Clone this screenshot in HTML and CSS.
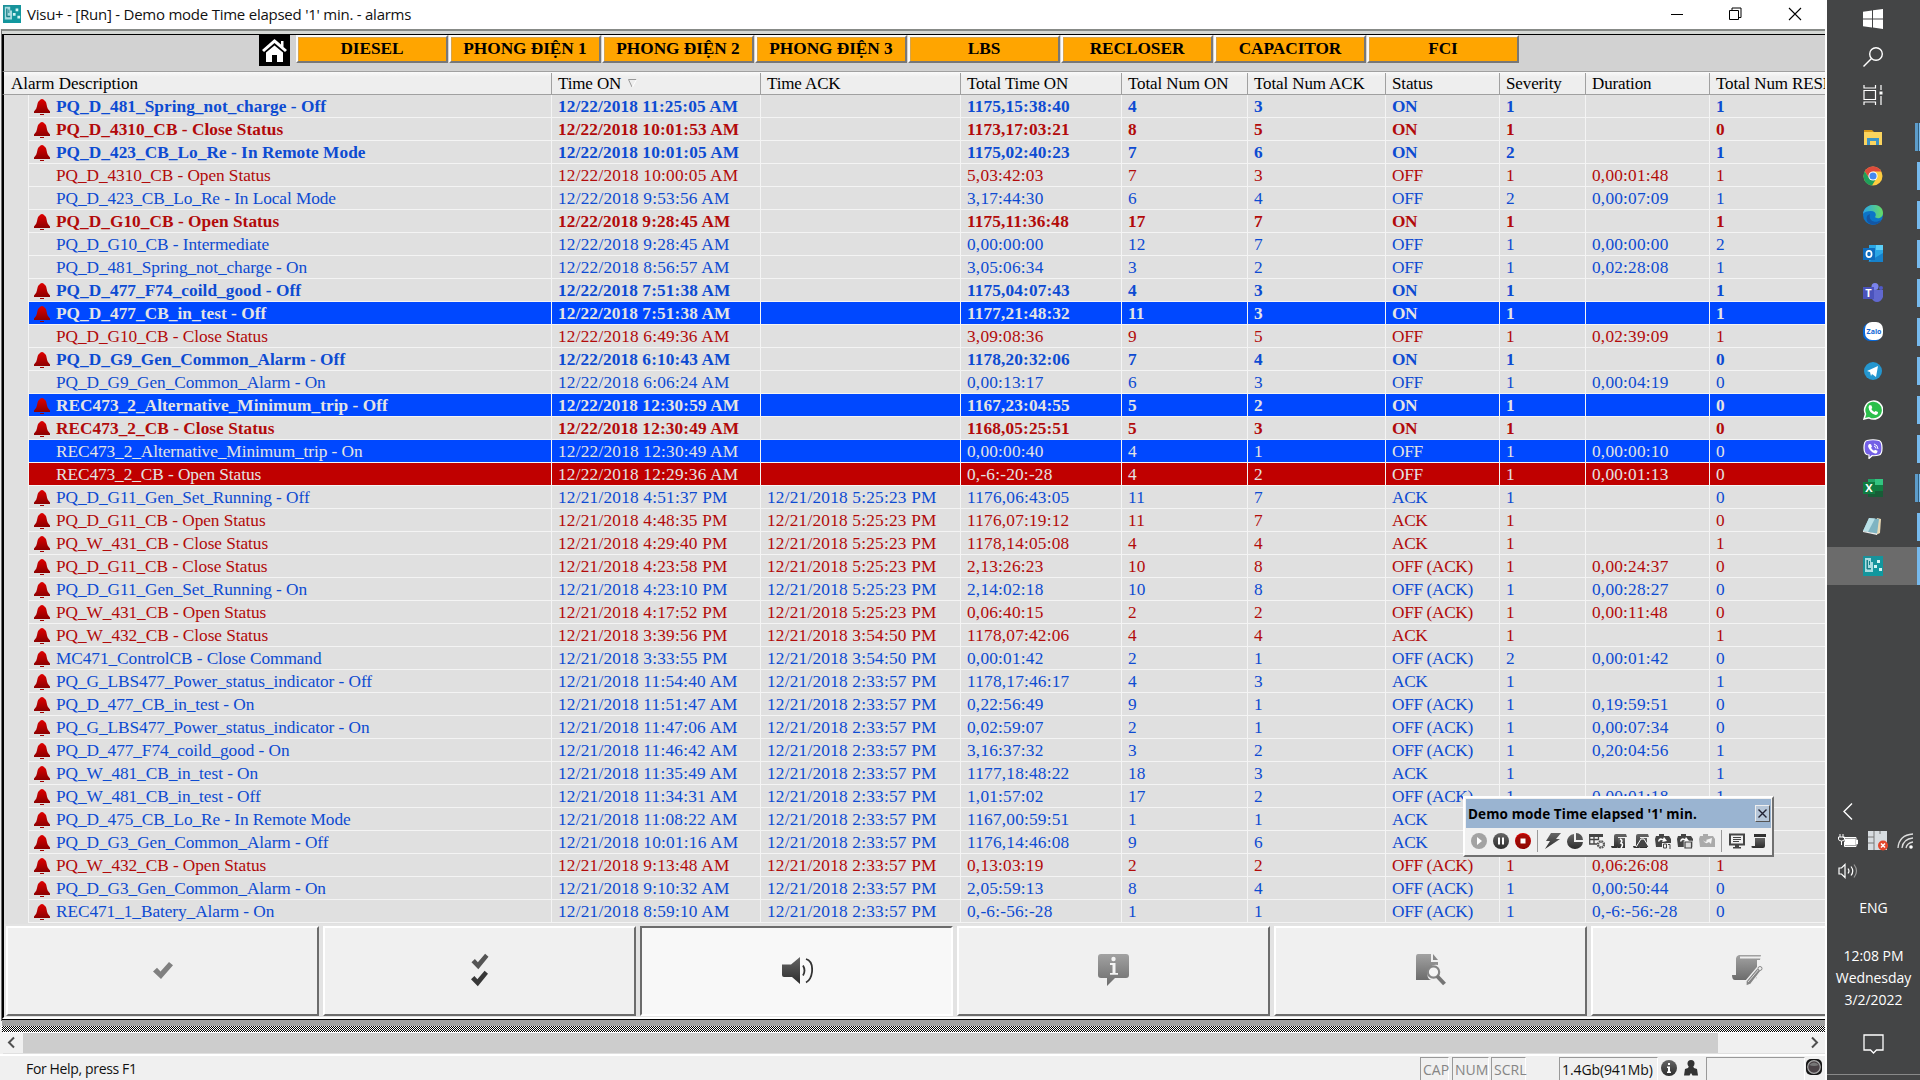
FILE: index.html
```html
<!DOCTYPE html>
<html lang="en">
<head>
<meta charset="utf-8">
<title>Visu+ - alarms</title>
<link rel="stylesheet" href="styles.css">
</head>
<body>
<svg class="defs" width="0" height="0">
  <defs>
    <linearGradient id="gRed" x1="0" y1="0" x2="0" y2="1"><stop offset="0" stop-color="#e00000"/><stop offset="1" stop-color="#8c0000"/></linearGradient>
    <linearGradient id="gDark" x1="0" y1="0" x2="0" y2="1"><stop offset="0" stop-color="#666"/><stop offset="1" stop-color="#2c2c2c"/></linearGradient>
    <linearGradient id="gGrey" x1="0" y1="0" x2="0" y2="1"><stop offset="0" stop-color="#a2a2a2"/><stop offset="1" stop-color="#6c6c6c"/></linearGradient>
    <linearGradient id="gTeal" x1="0" y1="0" x2="1" y2="1"><stop offset="0" stop-color="#1d8f98"/><stop offset="1" stop-color="#0d9aa0"/></linearGradient>
    <linearGradient id="gEdge" x1="0" y1="0" x2="1" y2="0"><stop offset="0" stop-color="#2aa5ea"/><stop offset="1" stop-color="#67dc63"/></linearGradient>
    <symbol id="bell" viewBox="0 0 16 16"><path d="M8 0C6.500 0 6.400 1 5.500 1.600 3 3.300 3.600 7 2.200 9.800L0 12.600V14h16v-1.400l-2.200-2.800C12.400 7 13 3.300 10.500 1.600 9.600 1 9.500 0 8 0z" fill="url(#gRed)"/><path d="M6 15h4v1H6z" fill="#a00000"/></symbol>
    <symbol id="visu" viewBox="0 0 20 20"><path d="M0 0h20v20H0z" fill="url(#gTeal)"/><path d="M2 2h6v4h2v10H2z" fill="#a9dce0"/><path d="M3.500 4H5v9H3.500zM6 5h1v4H6zM4 12h4v1.500H4z" fill="#1a7f88"/><path d="M14 4h3v3h-3zM11 9h3v3h-3zM16 12h3v3h-3z" fill="#d4f5f4"/></symbol>
    <symbol id="check" viewBox="0 0 20 20"><path d="M0 11l4-4 3.500 4L16 1l4 3.500L8 19z"/></symbol>
    <symbol id="scroll" viewBox="0 0 16 16"><path d="M5 1h10l1 3H7v9.500Q7 15 5.500 15H1.500Q0 15 0 13h3V3Q3 1 5 1z"/><path d="M7 5h7v10H6.500L7 13z"/></symbol>
  </defs>
</svg>
<div class="desktop">
  <main class="window">
    <header class="titlebar">
      <svg class="app-icon" width="18" height="18"><use href="#visu"/></svg>
      <span class="title">Visu+ - [Run] - Demo mode Time elapsed '1' min. - alarms</span>
      <div class="controls">
        <svg width="12" height="14"><path d="M0 7.500h12" stroke="#000"/></svg>
        <svg width="13" height="14" fill="none" stroke="#000"><path d="M.5 3.500h9v9h-9zM3 3.500V1h9v9.500H9.500"/></svg>
        <svg width="14" height="14"><path d="M1 1l12 12M13 1L1 13" stroke="#000" stroke-width="1.100"/></svg>
      </div>
    </header>
    <section class="client">
      <nav class="nav">
        <div class="home"><svg width="25" height="24" viewBox="0 0 25 24"><path d="M12.500 0L0 11l2 2L12.500 4 23 13l2-2-3.500-3V2h-2.500v3.500z" fill="#fff"/><path d="M4 13.500L12.500 6.500 21 13.500V23h-6v-7h-5v7H4z" fill="#fff"/></svg></div>
        <div class="tab">DIESEL</div><div class="tab">PHONG ĐIỆN 1</div><div class="tab">PHONG ĐIỆN 2</div><div class="tab">PHONG ĐIỆN 3</div><div class="tab">LBS</div><div class="tab">RECLOSER</div><div class="tab">CAPACITOR</div><div class="tab">FCI</div>
      </nav>
      <div class="cols head">
        <div class="name">Alarm Description</div><div>Time ON <svg width="9" height="9" viewBox="0 0 9 9" fill="none"><path d="M8.500.5h-8L4 8" stroke="#999"/><path d="M8.500.5L4.500 8" stroke="#fff"/></svg></div><div>Time ACK</div><div>Total Time ON</div><div>Total Num ON</div><div>Total Num ACK</div><div>Status</div><div>Severity</div><div>Duration</div><div>Total Num RESET</div>
      </div>
      <div class="rows" id="rows"></div>
      <div class="actions">
        <button><svg width="20" height="19" viewBox="0 0 20 20" preserveAspectRatio="none" fill="#808080"><use href="#check"/></svg></button>
        <button class="double"><svg width="20" height="17" fill="#555"><use href="#check"/></svg><svg width="21" height="17" fill="#383838"><use href="#check"/></svg></button>
        <button class="pressed"><svg width="32" height="27" viewBox="0 0 32 27"><path d="M1 7.500h9L19 0v27l-8-7H3q-2 0-2-2z" fill="url(#gDark)"/><path d="M22 8.500q3 5 0 10M25 2q7 2 6 13-1 8-6 10.500" fill="none" stroke="#333" stroke-width="1.800"/></svg></button>
        <button><svg width="33" height="34" viewBox="0 0 33 34"><path d="M4 1h25q3 0 3 3v18q0 3-3 3H18l-8 8v-8H4q-3 0-3-3V4q0-3 3-3z" fill="url(#gGrey)"/><circle cx="16.500" cy="6" r="2.200" fill="#f4f4f4"/><path d="M13 10h5.500v10H21v1.800h-8V20h2.500v-8H13z" fill="#f4f4f4"/></svg></button>
        <button><svg width="31" height="32" viewBox="0 0 31 32"><path d="M3 0h13v8h7v3a9 9 0 0 0-9 14l2 1H1V3q0-3 2-3z" fill="url(#gGrey)"/><path d="M18 0v6h5z" fill="#888"/><circle cx="18.500" cy="18" r="5.700" fill="#f4f4f4" stroke="#858585" stroke-width="2.200"/><path d="M22 22l7.500 8" stroke="#757575" stroke-width="4"/></svg></button>
        <button><svg width="31" height="32" viewBox="0 0 31 32"><path d="M7 1h22l-1 5H25v18l-8 2H3q-3 0-3-5h4V5q0-3 3-4z" fill="url(#gGrey)"/><path d="M8 2.500h21v2H8z" fill="#efefef"/><path d="M14 27L25 14l4 3-10 13-5 2z" fill="#858585" stroke="#efefef" stroke-width="1.300"/><path d="M16 28l11-13" stroke="#efefef" stroke-width=".8"/><circle cx="28" cy="14.500" r="2" fill="#efefef" stroke="#888"/></svg></button>
      </div>
      <div class="rule"></div>
    </section>
    <div class="hatch"></div>
    <div class="scrollbar">
      <svg width="20" height="20" fill="none" stroke="#505050" stroke-width="2"><path d="M11 4.500l-5 5 5 5"/></svg>
      <div class="thumb"></div>
      <svg width="20" height="20" fill="none" stroke="#505050" stroke-width="2"><path d="M7 4.500l5 5-5 5"/></svg>
    </div>
    <footer class="status">
      <span class="help">For Help, press F1</span>
      <span class="key cap">CAP</span><span class="key num">NUM</span><span class="key scrl">SCRL</span>
      <span class="mem">1.4Gb(941Mb)</span>
      <svg class="info" width="16" height="16" viewBox="0 0 16 16"><circle cx="8" cy="8" r="8" fill="url(#gDark)"/><path d="M6 6.500h3v5h1V13H6v-1.500h1V8H6zM7 3h2v2H7z" fill="#fff"/></svg>
      <svg class="user" width="14" height="16" viewBox="0 0 14 16"><circle cx="7" cy="3.500" r="3.500" fill="#333"/><path d="M5 6h4l1 2 3 1 1 6.500H8.500L7 13l-1.500 2.500H0L1 9l3-1z" fill="#333"/></svg>
      <span class="slot"></span>
      <svg class="led" width="16" height="16" viewBox="0 0 16 16"><rect width="16" height="16" rx="5" fill="#151515"/><circle cx="8" cy="8" r="6.300" fill="#4a4246" stroke="#aaa" stroke-width="1.200"/><path d="M3 6q5-5 10 0-5 2-10 0z" fill="#777"/></svg>
    </footer>

    <aside class="floating">
      <div class="float-title"><b>Demo mode Time elapsed '1' min.</b><span class="close"><svg width="9" height="9"><path d="M.5.5l8 8M8.500.5l-8 8" stroke="#223" stroke-width="1.400"/></svg></span></div>
      <div class="tools">
        <svg viewBox="0 0 16 16"><circle cx="8" cy="8" r="8" fill="#a3a3a3"/><path d="M6 4l5 4-5 4z" fill="#fff"/></svg>
        <svg viewBox="0 0 16 16"><circle cx="8" cy="8" r="8" fill="url(#gDark)"/><path d="M5 4.500h2v7H5zM9 4.500h2v7H9z" fill="#fff"/></svg>
        <svg viewBox="0 0 16 16"><circle cx="8" cy="8" r="8" fill="url(#gRed)"/><circle cx="8" cy="8" r="7" fill="#8f1007" opacity=".65"/><path d="M5.500 5.500h5v5h-5z" fill="#fff"/></svg>
        <i></i>
        <svg viewBox="0 0 16 16"><path d="M6 0h10l-5 6h4L0 16l5-8H1z" fill="url(#gDark)"/></svg>
        <svg viewBox="0 0 16 16"><path d="M7 1v8h9a8 7.500 0 1 1-9-8z" fill="url(#gDark)"/><path d="M9 0a7 7 0 0 1 7 7H9z" fill="#555"/></svg>
        <svg viewBox="0 0 16 16"><path d="M0 1h14v3H0z" fill="#444"/><path d="M.7 3v8H8M1 6.500h9M5 4v7M9.500 4v3" stroke="#444" stroke-width="1.300" fill="none"/><circle cx="12" cy="11.500" r="3" fill="#f0f0f0" stroke="#555" stroke-width="2.300" stroke-dasharray="1.700 .65"/></svg>
        <svg viewBox="0 0 16 16" fill="url(#gDark)"><use href="#scroll"/><path d="M9 6q3 1 1 4 3 1 0 5" fill="none" stroke="#fff" stroke-width="1.600"/></svg>
        <svg viewBox="0 0 16 16" fill="url(#gDark)"><use href="#scroll"/><path d="M3 14L8 6h3l5 8" fill="#444" stroke="#fff"/></svg>
        <svg viewBox="0 0 16 16"><path d="M1 3h3V1h5v2h5l2 3v8H1L0 6z" fill="#444"/><path d="M3 8q1-4 5-2l1-2 3 4-5 1 1-1.500Q5 6 4 9z" fill="#fff"/><path d="M7 10h9v6H7z" fill="#f0f0f0"/><path d="M8.500 11h3v4h-3zM13 11.500h2v4.500" fill="none" stroke="#444"/></svg>
        <svg viewBox="0 0 16 16"><path d="M1 3h3V1h5v2h5l2 3v8H1L0 6z" fill="#444"/><path d="M3 8q1-4 5-2l1-2 3 4-5 1 1-1.500Q5 6 4 9z" fill="#fff"/><path d="M8 9h6.500v6H8z" fill="#444" stroke="#eee" stroke-width="2.500"/><path d="M8 9h6.500v6H8z" fill="#ddd" stroke="#444" stroke-width="1.200"/></svg>
        <svg viewBox="0 0 16 16"><path d="M1 3h3V1h5v2h5l2 3v8H1L0 6z" fill="#aaa"/><path d="M4 7q2 3 4 1l-1-1 6-2-1 6-2-2q-4 3-6-2z" fill="#f4f4f4"/></svg>
        <i></i>
        <svg viewBox="0 0 16 16"><path d="M1 1.500h14v10H1z" fill="none" stroke="#444" stroke-width="2"/><path d="M4 4.500h8M4 6.500h8M4 8.500h6" stroke="#444"/><path d="M6 12h4v2h2v1.500H4V14h2z" fill="#444"/></svg>
        <svg viewBox="0 0 16 16"><path d="M3 1h12v3H3z" fill="#333"/><path d="M4 5h10v8q0 2-2 2H2q-2 0-1.500-2H4z" fill="url(#gDark)"/></svg>
      </div>
    </aside>
  </main>

  <aside class="taskbar">
    <div class="sys">
      <svg width="20" height="20" fill="#fff"><path d="M0 2.800L9 1.500V9.500H0zM10 1.300L20 0v9.500H10zM0 10.500h9v8L0 17.300zM10 10.500h10V20l-10-1.400z"/></svg>
      <svg width="20" height="20" fill="none" stroke="#fff" stroke-width="1.400"><circle cx="13" cy="7" r="6.300"/><path d="M8.500 11.500L.5 19.500"/></svg>
      <svg width="20" height="20" fill="none" stroke="#fff" stroke-width="1.200"><path d="M1 5.500h11.500v9H1zM1 0v3h11.500V0M1 20v-3h11.500v3M18 0v5M18 11v9"/><path d="M16.500 6.500h3v3h-3z" fill="#fff" stroke="none"/></svg>
    </div>
    <div class="apps">
      <div class="app wide"><svg viewBox="0 0 20 20"><path d="M1 3h8l2 2H1z" fill="#d99a1a"/><path d="M1 5h18v13H1z" fill="#fbd45e"/><path d="M4 11h12v7h-3v-4H7v4H4z" fill="#3c93c6"/></svg></div>
      <div class="app"><svg viewBox="0 0 20 20"><circle cx="10" cy="10" r="9.500" fill="#ffcd40"/><path d="M1.700 5.300A9.500 9.500 0 0 1 18.300 5.500H10L6 12z" fill="#de4b3c"/><path d="M1.700 5.300A9.500 9.500 0 0 0 9 19.500l4-6.500-7-1z" fill="#1f9f5b"/><circle cx="10" cy="10" r="4.600" fill="#fff"/><circle cx="10" cy="10" r="3.600" fill="#4688f0"/></svg></div>
      <div class="app"><svg viewBox="0 0 20 20"><circle cx="10" cy="10" r="10" fill="#0c74c8"/><path d="M0 9C1-3 20-3 20 8c0 6-7 6-8 4 2-3 0-6-4-6-4 0-7 1-8 3z" fill="url(#gEdge)"/><path d="M7 9c-2 7 5 10 11 6-2 5-10 7-14 1-1-4 0-6 3-7z" fill="#1356a4"/></svg></div>
      <div class="app"><svg viewBox="0 0 20 20"><path d="M6 1h14v17H6z" fill="#2aa6e5"/><path d="M13 1h7v5h-7z" fill="#5bd0fa"/><path d="M5 18l15-9v9z" fill="#1681cb"/><path d="M0 4h12v12H0z" fill="#0f6cbe"/><ellipse cx="6" cy="10" rx="2.600" ry="3.200" fill="none" stroke="#fff" stroke-width="1.700"/></svg></div>
      <div class="app"><svg viewBox="0 0 20 20"><circle cx="12" cy="3.500" r="3.500" fill="#7b83eb"/><circle cx="18" cy="5" r="2" fill="#5059c9"/><path d="M8 7h12v7q-2 5-6 5t-6-5z" fill="#6168cf"/><path d="M0 4h11v12H0z" fill="#4b53bc"/><text x="5.500" y="14" class="glyph">T</text></svg></div>
      <div class="app"><svg viewBox="0 0 20 20"><rect width="19" height="18" y="1" rx="7" fill="#0768d9"/><rect x="2" width="18" height="18" rx="7" fill="#fff"/><text x="11" y="12" class="zalo">Zalo</text></svg></div>
      <div class="app"><svg viewBox="0 0 20 20"><circle cx="10" cy="10" r="9" fill="#2496cf"/><path d="M4 10l11-5-2 11-4-3-1 2-1-4z" fill="#fff"/></svg></div>
      <div class="app"><svg viewBox="0 0 20 20"><path d="M1 19l1.500-5A9 9 0 1 1 6 17.800z" fill="#2bbf4b" stroke="#fff" stroke-width="1.500"/><path d="M6.500 5l2 .5.8 2.500-1 1q1 2 3 3l1.200-1 2.500 1q0 3-2.500 3Q6 13 5.500 7z" fill="#fff"/></svg></div>
      <div class="app"><svg viewBox="0 0 20 20"><path d="M4 1.500Q10 0 16 1.500q3 1 3 7.500t-3 7q-3 1-7 .7L6 19.500V16q-5 0-5-7t3-7.500z" fill="#7460e6" stroke="#fff" stroke-width="1.200"/><path d="M6 5l2 .3 1 2.500-1 1q1 2 3 3l1-1 2.500 1q0 3-2.500 2.800Q6 12 5 7z" fill="#fff"/><path d="M11 5q4 1 4 5M11 7q2 .5 2 2.500" stroke="#fff" fill="none"/></svg></div>
      <div class="app wide"><svg viewBox="0 0 20 20"><path d="M5 1h8v18H5z" fill="#21a366"/><path d="M12 1h8v6h-8z" fill="#33c481"/><path d="M12 7h8v6h-8z" fill="#107c41"/><path d="M5 13h15v6H5z" fill="#185c37"/><path d="M0 4h12v12H0z" fill="#107c41"/><text x="6" y="14" class="glyph">X</text></svg></div>
      <div class="app"><svg viewBox="0 0 20 20"><path d="M14 1l4 1-1 14-4 2z" fill="#e8d9b5"/><path d="M6 1l10 1-2 15L0 14z" fill="#7fb4c2"/><path d="M6 1l6 .5L5 15l-5-1z" fill="#b9e0e6"/><path d="M0 14l14 2.500V18L0 15z" fill="#eee"/></svg></div>
      <div class="app active"><svg viewBox="0 0 20 20"><use href="#visu"/></svg></div>
    </div>
    <div class="tray">
      <svg class="chev" width="10" height="17" fill="none" stroke="#fff" stroke-width="1.400"><path d="M9 .5l-8 8 8 8"/></svg>
      <div class="tray-row">
        <svg width="20" height="16" fill="none" stroke="#fff"><path d="M5 4.500h13v9H6.500V9"/><path d="M7 6h10v6H7zM18.500 7h1v4h-1z" fill="#fff"/><path d="M2 1v3M5 1v3M.5 4h6v2q0 2-3 2t-3-2zM3.500 8v4" /></svg>
        <svg width="20" height="20"><path d="M0 0h19v19H0z" fill="#d7dce0"/><path d="M0 6h6M0 12h6M6 0v19M12 0v3" stroke="#777"/><circle cx="15" cy="14.500" r="5" fill="#e3472c"/><path d="M13 12.500l4 4M17 12.500l-4 4" stroke="#fff" stroke-width="1.500"/></svg>
        <svg width="16" height="16" fill="none" stroke="#ddd" stroke-width="1.300"><path d="M1 15Q2 2 16 1M5 15Q6 6 16 5M9 15Q10 10 16 9"/><circle cx="14" cy="14" r="1.800" fill="#fff" stroke="none"/></svg>
      </div>
      <svg class="vol" width="20" height="18" fill="none" stroke="#fff" stroke-width="1.200"><path d="M1 6h2.500L7 2.500v13L3.500 12H1zM10 6.500q2 2.500 0 5M13 4.500q3.500 4.500 0 9"/><path d="M16 2.500q5 6.500 0 13" stroke="#999"/></svg>
      <div class="lang">ENG</div>
      <div class="clock"><span>12:08 PM</span><span>Wednesday</span><span>3/2/2022</span></div>
      <svg class="note" width="21" height="20" fill="none" stroke="#fff" stroke-width="1.300"><path d="M1 1h19v15h-6.500L10.500 19 7.500 16H1z"/></svg>
      <div class="show"></div>
    </div>
  </aside>
</div>
<script src="alarms.js"></script>
</body>
</html>
```
FILE: styles.css
```css
* { box-sizing: border-box; }
body { margin: 0; overflow: hidden; font-family: "Open Sans", "Noto Sans", sans-serif; }
svg { display: block; flex: none; }
.defs { position: absolute; }
.desktop { display: flex; width: 1920px; height: 1080px; }
.window { position: relative; width: 1827px; height: 1080px; display: flex; flex-direction: column; background: #f0f0f0; border-right: 2px solid #fff; }

.titlebar { height: 29px; flex: none; display: flex; align-items: center; background: #fff; padding: 0 23px 1px 3px; }
.title { margin-left: 6px; font-size: 15px; letter-spacing: -0.24px; line-height: 28px; color: #111; white-space: nowrap; }
.controls { margin-left: auto; display: flex; gap: 46px; }

.client { height: 992px; flex: none; border-top: 2px solid #878a87; border-left: 1px solid #6f6f6f; margin-left: 1px; display: flex; flex-direction: column; background: #d5d8d5; padding-top: 3px; overflow: hidden; }
.nav { height: 37px; flex: none; border-top: 1px solid #000; border-left: 2px solid #000; background: #d2d2d2; display: flex; align-items: flex-start; font: bold 17.300px/24px "Liberation Serif", serif; letter-spacing: -0.05px; }
.home { width: 31px; height: 31px; margin-left: 255px; margin-right: 6px; background: #000; display: grid; place-items: center; }
.tab { width: 152px; height: 28px; margin-right: 1px; text-align: center; background: #ffa500; border: 2px solid; border-color: #fafafa #777 #777 #fafafa; box-shadow: inset 1px 1px 0 #d6a44c; flex: none; white-space: nowrap; }

.cols { display: grid; grid-template-columns: 547px 209px 200px 161px 126px 138px 114px 86px 124px 1fr; }
.head { height: 24px; flex: none; border-left: 2px solid #000; border-top: 1px solid #a0a0a0; border-bottom: 1px solid #a0a0a0; background: linear-gradient(#fafafa, #eee 5px); font: 17px/21px "Liberation Serif", serif; letter-spacing: -0.12px; color: #000; }
.head div { display: flex; align-items: center; gap: 7px; margin-top: 1px; padding-left: 6px; border-left: 1px solid #a0a0a0; white-space: nowrap; overflow: hidden; }
.head .name { border-left: 0; padding-left: 7px; letter-spacing: 0; }
.rows { height: 829px; flex: none; background: #e0e0e0; border-left: 2px solid #000; font: 17.300px/23px "Liberation Serif", serif; }
.row { height: 23px; grid-template-columns: 523px 209px 200px 161px 126px 138px 114px 86px 124px 1fr; margin-left: 24px; color: #0d4bd2; letter-spacing: 0.21px; }
.row.red { color: #b20a0a; }
.row.bold { font-weight: bold; letter-spacing: 0.12px; }
.row > div { border-left: 1px solid #f4f4f4; border-bottom: 1px solid #f4f4f4; padding-left: 6px; white-space: pre; overflow: hidden; height: 23px; }
.row > .name { padding-left: 27px; letter-spacing: -0.07px; }
.row > .bell { padding-left: 5px; display: flex; gap: 6px; letter-spacing: -0.06px; }
.row.bold > .bell { letter-spacing: 0.04px; }
.row > div:nth-child(7) { letter-spacing: -0.35px; }
.bell svg { margin-top: 4px; }
.row.fill { color: #e4e4e4; }
.row.fill > div { background: #0048ff; }
.row.fill.red > div { background: #c00000; }

.actions { height: 95px; flex: none; display: flex; gap: 4px; padding: 2px 0 0 2px; background: #e3e3e3; border-left: 2px solid #000; border-bottom: 2px solid #fff; }
.actions button { width: 313px; height: 90px; flex: none; padding: 0 0 2px; display: flex; align-items: center; justify-content: center; background: #f0f0f0; border: 2px solid; border-color: #fff #6c6c6c #6c6c6c #fff; }
.actions .double { flex-direction: column; }
.actions .pressed { background: #f8f8f8; border-color: #6c6c6c #fff #fff #6c6c6c; }
.rule { height: 6px; flex: none; border-top: 1px solid #000; background: #a0a0a0; }
.hatch { height: 11px; flex: none; margin-left: 2px; border-top: 5px solid #a0a0a0; background: repeating-conic-gradient(#000 0 25%, #fff 0 50%) 0 0 / 2px 2px; }
.scrollbar { height: 22px; flex: none; margin-left: 3px; display: flex; border-top: 1px solid #fff; border-bottom: 1px solid #e0e0e0; background: #f0f0f0; }
.thumb { width: 1695px; background: #cdcdcd; margin-right: 87px; }
.status { height: 26px; flex: none; display: flex; align-items: flex-start; border-top: 2px solid #fff; font-size: 14px; line-height: 23px; padding-top: 1px; white-space: nowrap; }
.help { margin-left: 26px; width: 1394px; color: #111; letter-spacing: -0.35px; }
.key, .mem, .slot { height: 23px; flex: none; border-left: 1px solid #999; border-top: 1px solid #999; border-right: 1px solid #fff; padding-left: 2px; color: #858585; }
.cap { width: 29px; } .num { width: 37px; margin-left: 3px; } .scrl { width: 35px; margin-left: 2px; }
.mem { width: 99px; margin-left: 33px; color: #111; letter-spacing: -0.1px; }
.info { margin: 3px 7px 0 3px; } .user { margin-top: 3px; }
.slot { width: 99px; margin-left: 8px; } .led { margin: 2px 0 0 1px; }

.floating { position: absolute; left: 1463px; top: 796px; width: 311px; height: 61px; padding: 1px; background: #f0f0f0; border: 2px solid; border-color: #fff #707070 #707070 #fff; }
.float-title { height: 29px; display: flex; align-items: center; justify-content: space-between; background: #9ab4d1; padding: 0 1px 0 2px; font-size: 13.500px; letter-spacing: 0.11px; white-space: nowrap; color: #000; }
.close { width: 15px; height: 17px; display: grid; place-items: center; border: 1px solid; border-color: #eee #555 #555 #eee; background: #b6c6d8; }
.tools { height: 26px; display: flex; align-items: center; padding-left: 5px; gap: 6px; }
.tools svg { width: 16px; height: 16px; }
.tools i { width: 1px; height: 22px; background: #999; margin: 0 1px 0 0; }

.taskbar { width: 93px; height: 1080px; background: #444546; display: flex; flex-direction: column; color: #fff; }
.sys { height: 118px; padding: 9px 0 0 36px; display: flex; flex-direction: column; gap: 18px; }
.app { height: 38px; margin-bottom: 1px; padding: 9px 0 0 36px; background: linear-gradient(#76b9ed, #76b9ed) right center / 3px 28px no-repeat; }
.app.wide { background: linear-gradient(90deg, #5d9cca 3px, #315b79 3px 4px, #76b9ed 4px) right center / 5px 28px no-repeat; }
.app.active { background: linear-gradient(#76b9ed, #76b9ed) right center / 3px 38px no-repeat #6b6b6b; }
.app svg { width: 20px; height: 20px; }
.glyph { font: bold 11px "Open Sans", sans-serif; fill: #fff; text-anchor: middle; }
.zalo { font: bold 7px "Open Sans", sans-serif; fill: #1266d6; text-anchor: middle; }
.tray { margin-top: auto; height: 277px; display: flex; flex-direction: column; align-items: flex-start; font-size: 14px; }
.chev { margin-left: 16px; }
.tray-row { display: flex; gap: 10px; align-items: center; margin: 11px 0 0 11px; }
.tray-row svg + svg + svg { margin-left: -1px; }
.vol { margin: 11px 0 0 11px; }
.lang { width: 93px; text-align: center; line-height: 20px; margin-top: 18px; }
.clock { width: 93px; text-align: center; display: flex; flex-direction: column; line-height: 22px; margin-top: 27px; white-space: nowrap; letter-spacing: -0.05px; }
.note { margin: 23px 0 0 36px; }
.show { width: 93px; height: 6px; margin-top: auto; border-top: 1px solid #898989; }
```
FILE: alarms.js
```js
// One alarm per line: colour (b/r, upper case = filled row) | description | time on | time ack | total time | num on | num ack | status | severity | duration | resets
const alarms = `b|PQ_D_481_Spring_not_charge - Off|12/22/2018 11:25:05 AM||1175,15:38:40|4|3|ON|1||1
r|PQ_D_4310_CB - Close Status|12/22/2018 10:01:53 AM||1173,17:03:21|8|5|ON|1||0
b|PQ_D_423_CB_Lo_Re - In Remote Mode|12/22/2018 10:01:05 AM||1175,02:40:23|7|6|ON|2||1
r|PQ_D_4310_CB - Open Status|12/22/2018 10:00:05 AM||5,03:42:03|7|3|OFF|1|0,00:01:48|1
b|PQ_D_423_CB_Lo_Re - In Local Mode|12/22/2018 9:53:56 AM||3,17:44:30|6|4|OFF|2|0,00:07:09|1
r|PQ_D_G10_CB - Open Status|12/22/2018 9:28:45 AM||1175,11:36:48|17|7|ON|1||1
b|PQ_D_G10_CB - Intermediate|12/22/2018 9:28:45 AM||0,00:00:00|12|7|OFF|1|0,00:00:00|2
b|PQ_D_481_Spring_not_charge - On|12/22/2018 8:56:57 AM||3,05:06:34|3|2|OFF|1|0,02:28:08|1
b|PQ_D_477_F74_coild_good - Off|12/22/2018 7:51:38 AM||1175,04:07:43|4|3|ON|1||1
B|PQ_D_477_CB_in_test - Off|12/22/2018 7:51:38 AM||1177,21:48:32|11|3|ON|1||1
r|PQ_D_G10_CB - Close Status|12/22/2018 6:49:36 AM||3,09:08:36|9|5|OFF|1|0,02:39:09|1
b|PQ_D_G9_Gen_Common_Alarm - Off|12/22/2018 6:10:43 AM||1178,20:32:06|7|4|ON|1||0
b|PQ_D_G9_Gen_Common_Alarm - On|12/22/2018 6:06:24 AM||0,00:13:17|6|3|OFF|1|0,00:04:19|0
B|REC473_2_Alternative_Minimum_trip - Off|12/22/2018 12:30:59 AM||1167,23:04:55|5|2|ON|1||0
r|REC473_2_CB - Close Status|12/22/2018 12:30:49 AM||1168,05:25:51|5|3|ON|1||0
B|REC473_2_Alternative_Minimum_trip - On|12/22/2018 12:30:49 AM||0,00:00:40|4|1|OFF|1|0,00:00:10|0
R|REC473_2_CB - Open Status|12/22/2018 12:29:36 AM||0,-6:-20:-28|4|2|OFF|1|0,00:01:13|0
b|PQ_D_G11_Gen_Set_Running - Off|12/21/2018 4:51:37 PM|12/21/2018 5:25:23 PM|1176,06:43:05|11|7|ACK|1||0
r|PQ_D_G11_CB - Open Status|12/21/2018 4:48:35 PM|12/21/2018 5:25:23 PM|1176,07:19:12|11|7|ACK|1||0
r|PQ_W_431_CB - Close Status|12/21/2018 4:29:40 PM|12/21/2018 5:25:23 PM|1178,14:05:08|4|4|ACK|1||1
r|PQ_D_G11_CB - Close Status|12/21/2018 4:23:58 PM|12/21/2018 5:25:23 PM|2,13:26:23|10|8|OFF (ACK)|1|0,00:24:37|0
b|PQ_D_G11_Gen_Set_Running - On|12/21/2018 4:23:10 PM|12/21/2018 5:25:23 PM|2,14:02:18|10|8|OFF (ACK)|1|0,00:28:27|0
r|PQ_W_431_CB - Open Status|12/21/2018 4:17:52 PM|12/21/2018 5:25:23 PM|0,06:40:15|2|2|OFF (ACK)|1|0,00:11:48|0
r|PQ_W_432_CB - Close Status|12/21/2018 3:39:56 PM|12/21/2018 3:54:50 PM|1178,07:42:06|4|4|ACK|1||1
b|MC471_ControlCB - Close Command|12/21/2018 3:33:55 PM|12/21/2018 3:54:50 PM|0,00:01:42|2|1|OFF (ACK)|2|0,00:01:42|0
b|PQ_G_LBS477_Power_status_indicator - Off|12/21/2018 11:54:40 AM|12/21/2018 2:33:57 PM|1178,17:46:17|4|3|ACK|1||1
b|PQ_D_477_CB_in_test - On|12/21/2018 11:51:47 AM|12/21/2018 2:33:57 PM|0,22:56:49|9|1|OFF (ACK)|1|0,19:59:51|0
b|PQ_G_LBS477_Power_status_indicator - On|12/21/2018 11:47:06 AM|12/21/2018 2:33:57 PM|0,02:59:07|2|1|OFF (ACK)|1|0,00:07:34|0
b|PQ_D_477_F74_coild_good - On|12/21/2018 11:46:42 AM|12/21/2018 2:33:57 PM|3,16:37:32|3|2|OFF (ACK)|1|0,20:04:56|1
b|PQ_W_481_CB_in_test - On|12/21/2018 11:35:49 AM|12/21/2018 2:33:57 PM|1177,18:48:22|18|3|ACK|1||1
b|PQ_W_481_CB_in_test - Off|12/21/2018 11:34:31 AM|12/21/2018 2:33:57 PM|1,01:57:02|17|2|OFF (ACK)|1|0,00:01:18|1
b|PQ_D_475_CB_Lo_Re - In Remote Mode|12/21/2018 11:08:22 AM|12/21/2018 2:33:57 PM|1167,00:59:51|1|1|ACK|||
b|PQ_D_G3_Gen_Common_Alarm - Off|12/21/2018 10:01:16 AM|12/21/2018 2:33:57 PM|1176,14:46:08|9|6|ACK|||
r|PQ_W_432_CB - Open Status|12/21/2018 9:13:48 AM|12/21/2018 2:33:57 PM|0,13:03:19|2|2|OFF (ACK)|1|0,06:26:08|1
b|PQ_D_G3_Gen_Common_Alarm - On|12/21/2018 9:10:32 AM|12/21/2018 2:33:57 PM|2,05:59:13|8|4|OFF (ACK)|1|0,00:50:44|0
b|REC471_1_Batery_Alarm - On|12/21/2018 8:59:10 AM|12/21/2018 2:33:57 PM|0,-6:-56:-28|1|1|OFF (ACK)|1|0,-6:-56:-28|0`;

const bell = '<svg width="16" height="16"><use href="#bell"/></svg>';
document.getElementById('rows').innerHTML = alarms.split('\n').map(line => {
  const [kind, name, ...cells] = line.split('|');
  const status = cells[5];
  const cls = ['cols', 'row'];
  if (kind.toLowerCase() === 'r') cls.push('red');
  if (kind === kind.toUpperCase()) cls.push('fill');
  if (status === 'ON') cls.push('bold');
  const first = status === 'OFF'
    ? `<div class="name">${name}</div>`
    : `<div class="bell">${bell}${name}</div>`;
  return `<div class="${cls.join(' ')}">${first}${cells.map(c => `<div>${c}</div>`).join('')}</div>`;
}).join('');
```
